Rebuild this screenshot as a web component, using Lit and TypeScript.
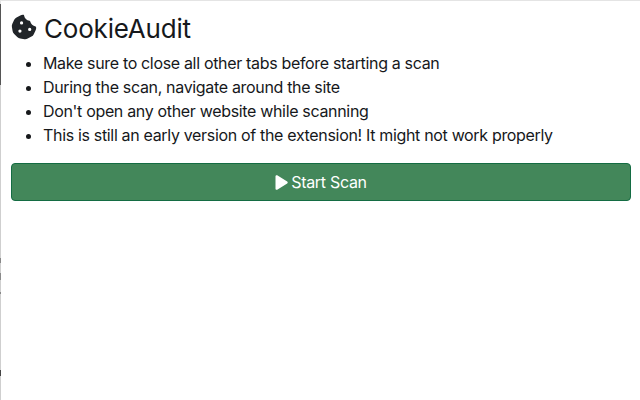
import { LitElement, html, css } from "lit";
import { customElement } from "lit/decorators.js";

@customElement("app-root")
export class AppRoot extends LitElement {
  static styles = css`
    :host {
      display: block;
      width: 640px;
      height: 400px;
      box-sizing: border-box;
      color: #16181b;
      font-family: Inter, "Liberation Sans", sans-serif;
      border-top: 1px solid #e4e4e4;
      padding-left: 1px;
      overflow: hidden;
      background:
        linear-gradient(
          to bottom,
          #e4e4e4 0 3px,
          #555 3px 84px,
          #cfcfcf 84px 257px,
          #888 257px 262px,
          #cfcfcf 262px 272px,
          #8a8a8a 272px 279px,
          #cfcfcf 279px 291px,
          #888 291px 293px,
          #cfcfcf 293px 369px,
          #444 369px 375px,
          #cfcfcf 375px
        ) 0 0 / 1px 100% no-repeat,
        #fff;
    }
    .page {
      padding: 0 9px 0 10px;
    }
    .title {
      display: flex;
      align-items: center;
      gap: 7px;
      box-sizing: border-box;
      height: 50px;
      padding-top: 4px;
      margin: 0;
      font-size: 26px;
      font-weight: 400;
      letter-spacing: -0.2px;
    }
    .title svg {
      width: 26px;
      height: 26px;
      fill: #212529;
      margin-bottom: 3px;
    }
    ul {
      margin: 0;
      padding: 0 0 0 32px;
      font-size: 16px;
      line-height: 24px;
      letter-spacing: -0.33px;
    }
    li { height: 24px; white-space: nowrap; }
    .scan {
      display: flex;
      align-items: center;
      justify-content: center;
      gap: 3px;
      box-sizing: border-box;
      width: 100%;
      height: 38px;
      margin-top: 16px;
      border: 1px solid #146c43;
      border-radius: 4px;
      background: #43875a;
      color: #fff;
      font: inherit;
      font-size: 16px;
      letter-spacing: -0.3px;
      padding: 0;
    }
    .scan svg { width: 13px; height: 15px; fill: #fff; }
  `;

  render() {
    return html`
      <div class="page">
        <h1 class="title">
          <svg viewBox="0 0 512 512" aria-hidden="true">
            <path d="M257.5 27.6c-.8-5.4-4.9-9.8-10.3-10.6c-22.1-3.1-44.6 .9-64.4 11.4l-74 39.5C89.1 78.4 73.2 94.9 63.4 115L26.7 190.6c-9.8 20.1-13 42.9-9.1 64.9l14.5 82.8c3.9 22.1 14.6 42.3 30.7 57.9l60.3 58.4c16.1 15.6 36.6 25.6 58.7 28.7l83 11.7c22.1 3.1 44.6-.9 64.4-11.4l74-39.5c19.7-10.5 35.6-27 45.4-47.2l36.7-75.5c9.8-20.1 13-42.9 9.1-64.9c-.9-5.3-5.3-9.3-10.6-10.1c-51.5-8.2-92.8-47.1-104.5-97.4c-1.8-7.6-8-13.4-15.7-14.6c-54.6-8.7-97.7-52-106.2-106.8zM208 144a32 32 0 1 1 0 64 32 32 0 1 1 0-64zM144 336a32 32 0 1 1 64 0 32 32 0 1 1-64 0zm224-64a32 32 0 1 1 0 64 32 32 0 1 1 0-64z"/>
          </svg>
          <span>CookieAudit</span>
        </h1>
        <ul>
          <li>Make sure to close all other tabs before starting a scan</li>
          <li>During the scan, navigate around the site</li>
          <li>Don't open any other website while scanning</li>
          <li>This is still an early version of the extension! It might not work properly</li>
        </ul>
        <button class="scan">
          <svg viewBox="0 0 13 15" aria-hidden="true"><path d="M0.5 1.3C0.5 .4 1.4 -.1 2.2 .3L12.2 6.5C12.9 6.9 12.9 8.1 12.2 8.5L2.2 14.7C1.4 15.1 .5 14.6 .5 13.7Z"/></svg>
          <span>Start Scan</span>
        </button>
      </div>
    `;
  }
}
